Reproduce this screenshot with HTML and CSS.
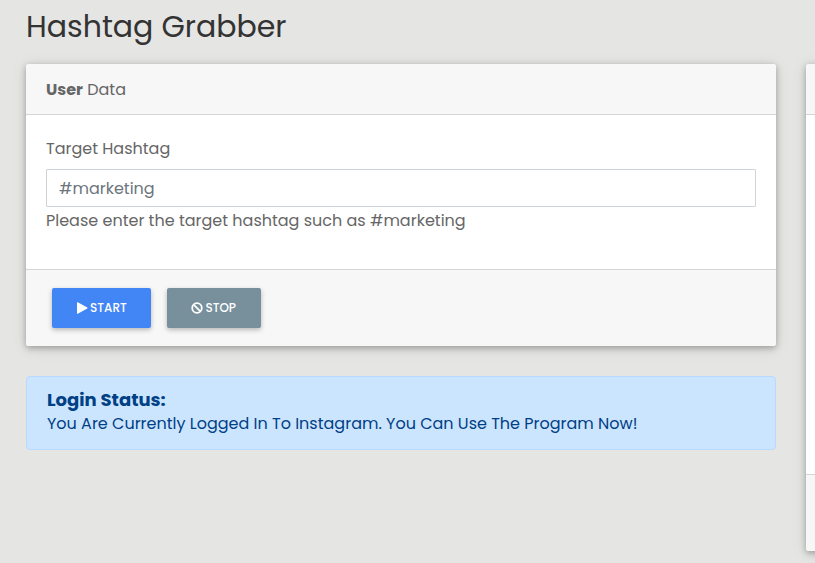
FILE: index.html
```html
<!DOCTYPE html>
<html lang="en">
<head>
<meta charset="utf-8">
<meta name="viewport" content="width=device-width, initial-scale=1">
<title>Hashtag Grabber</title>
<link rel="stylesheet" href="styles.css">
</head>
<body>
<main class="page">
  <h1 class="page-title">Hashtag Grabber</h1>
  <div class="columns">
    <div class="column">
      <form class="card">
        <header class="card-header"><strong>User</strong> Data</header>
        <div class="card-body">
          <label class="field-label" for="hashtag">Target Hashtag</label>
          <input class="field-input" id="hashtag" type="text" placeholder="#marketing">
          <p class="field-help">Please enter the target hashtag such as #marketing</p>
        </div>
        <footer class="card-footer">
          <button class="btn btn-start" type="button">
            <svg class="icon" viewBox="0 0 12 12" aria-hidden="true"><path d="M1 .8Q1 0 1.8.3L11.3 5.5Q12 6 11.3 6.5L1.8 11.7Q1 12 1 11.2Z" fill="currentColor"/></svg>
            <span>START</span>
          </button>
          <button class="btn btn-stop" type="button">
            <svg class="icon" viewBox="0 0 12 12" aria-hidden="true"><g fill="none" stroke="currentColor" stroke-width="1.8"><circle cx="6" cy="6" r="4.8"/><path d="M2.6 2.6l6.8 6.8"/></g></svg>
            <span>STOP</span>
          </button>
        </footer>
      </form>
      <section class="alert">
        <h2 class="alert-title">Login Status:</h2>
        <p class="alert-text">You Are Currently Logged In To Instagram. You Can Use The Program Now!</p>
      </section>
    </div>
    <div class="column">
      <section class="card">
        <header class="card-header"></header>
        <div class="card-body card-body-tall"></div>
        <footer class="card-footer"></footer>
      </section>
    </div>
  </div>
</main>
</body>
</html>
```
FILE: styles.css
```css
* {
  box-sizing: border-box;
}

body {
  margin: 0;
  background: #e5e5e3;
  color: #666;
  font-family: Poppins, Inter, "Liberation Sans", sans-serif;
  font-size: 16px;
  line-height: 24px;
}

h1, h2, p {
  margin: 0;
}

.page {
  min-height: 100vh;
  padding: 9px 0 12px 26px;
  overflow: hidden;
}

.page-title {
  margin-bottom: 19px;
  color: #333;
  font-size: 30px;
  font-weight: 400;
  line-height: 36px;
}

/* The second column continues past the right edge of the window. */
.columns {
  display: grid;
  grid-template-columns: repeat(2, calc(100% - 39px));
  gap: 30px;
  align-items: start;
}

.column {
  display: grid;
  gap: 30px;
}

.card {
  border-radius: 3px;
  background: #fff;
  box-shadow: 0 2px 6px rgba(0, 0, 0, 0.28), 0 2px 16px rgba(0, 0, 0, 0.1);
}

.card-header {
  min-height: 51px;
  padding: 14px 20px 12px;
  border-bottom: 1px solid #d5d5d5;
  border-radius: 3px 3px 0 0;
  background: #f7f7f7;
}

.card-body {
  padding: 22px 20px 36px;
}

.card-body-tall {
  min-height: 359px;
}

.card-footer {
  display: flex;
  gap: 16px;
  min-height: 77px;
  padding: 18px 26px;
  border-top: 1px solid #d5d5d5;
  border-radius: 0 0 3px 3px;
  background: #f7f7f7;
}

.field-label {
  display: block;
  margin-bottom: 8px;
}

.field-input {
  display: block;
  width: 100%;
  height: 38px;
  padding: 0 12px;
  border: 1px solid #ced4da;
  border-radius: 1px;
  background: #fff;
  color: #495057;
  font: inherit;
}

.field-input::placeholder {
  color: #6c757d;
  opacity: 1;
}

.field-help {
  margin-top: 2px;
}

.btn {
  display: inline-flex;
  align-items: center;
  justify-content: center;
  gap: 2px;
  min-width: 94px;
  height: 40px;
  padding: 0 24px;
  border: 0;
  border-radius: 2px;
  color: #fff;
  font-family: inherit;
  font-size: 12px;
  font-weight: 500;
  box-shadow: 0 2px 5px rgba(0, 0, 0, 0.26);
}

.btn-start {
  background: #4285f4;
}

.btn-stop {
  background: #78909c;
}

.icon {
  width: 12px;
  height: 12px;
}

.alert {
  padding: 11px 20px 13px;
  border: 1px solid #b8daff;
  border-radius: 4px;
  background: #cce5ff;
  color: #004085;
}

.alert-title {
  font-size: 18px;
  font-weight: 700;
  line-height: 24px;
}
```
